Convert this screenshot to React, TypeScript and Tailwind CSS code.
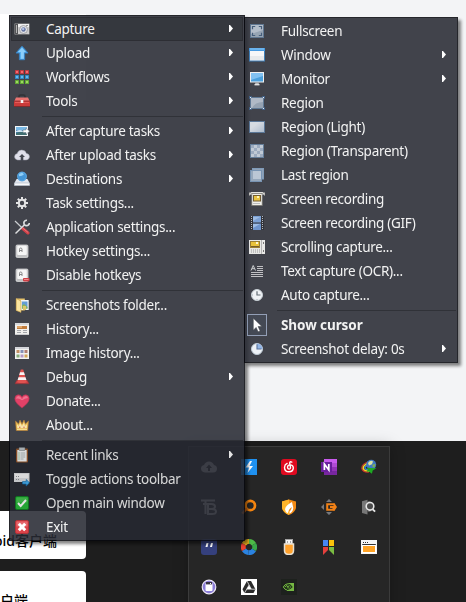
import React from "react";

type Item = { label: string; icon: React.ReactNode; arrow?: boolean; bold?: boolean; hover?: boolean; framed?: boolean };
type Group = Item[];

function Svg({ children }: { children: React.ReactNode }) {
  return (
    <svg width="16" height="16" viewBox="0 0 16 16" className="block shrink-0">
      {children}
    </svg>
  );
}

const Camera = (
  <Svg>
    <rect x="0.5" y="2.5" width="15" height="11" rx="1" fill="#c9c9c9" stroke="#55565a" />
    <rect x="1" y="3" width="3" height="10" fill="#3c3d40" />
    <rect x="2" y="4" width="1" height="8" fill="#a8a8a8" />
    <rect x="4" y="3" width="11" height="3" fill="#eeeeee" />
    <rect x="12" y="4" width="2" height="1" fill="#888" />
    <circle cx="9.5" cy="8.5" r="4" fill="#e2e2e4" stroke="#85868b" strokeWidth=".8" />
    <circle cx="9.5" cy="8.5" r="2.2" fill="#4a5d92" />
    <circle cx="9.2" cy="8" r="1.2" fill="#a8b9e2" />
  </Svg>
);
const UploadArrow = (
  <Svg>
    <path d="M8 1.2 14 8h-3.4v6.7H5.4V8H2z" fill="#3fa6ef" stroke="#1c6fb9" strokeWidth="1" />
    <path d="M8 2.7 11.8 7H9.8v6.8H7V7H4z" fill="#7cc9fb" />
  </Svg>
);
const Workflows = (
  <Svg>
    {[
      ["#b81e25", "#f0565c", 1],
      ["#1979b8", "#48b3ef", 6],
      ["#4c9a1b", "#8fd44a", 11],
    ].map(([d, l, y]) =>
      [1, 6, 11].map((x) => (
        <g key={`${x}-${y}`}>
          <rect x={x} y={y} width="4" height="4" rx=".5" fill={d as string} />
          <rect x={x + 1} y={Number(y) + 1} width="2" height="2" fill={l as string} />
        </g>
      ))
    )}
  </Svg>
);
const Toolbox = (
  <Svg>
    <path d="M5 5V3.2Q5 2 6.5 2h3Q11 2 11 3.2V5" fill="none" stroke="#15161a" strokeWidth="1.6" />
    <path d="M2 4.5h12l2 4.5H0z" fill="#e8605d" />
    <rect x="0" y="8" width="16" height="5.5" fill="#c4201f" />
    <rect x="0" y="7.6" width="16" height="1" fill="#8b1415" />
    <rect x="1" y="9" width="14" height="1" fill="#e24542" />
    <rect x="6.7" y="7" width="2.6" height="3" fill="#f4f4f4" />
    <rect x="0" y="13" width="16" height="1" fill="#6d0f10" />
  </Svg>
);
const AfterCapture = (
  <Svg>
    <rect x="1" y="3" width="13" height="10" fill="#f4f7fa" />
    <rect x="2" y="4" width="11" height="8" fill="#2d6fa9" />
    <rect x="2" y="4" width="11" height="3" fill="#69b1e4" />
    <path d="M2 8q4-2 7 0l4-1v2H2z" fill="#c9e2f2" />
    <path d="M2 10q5-2 11 0v2H2z" fill="#275c5e" />
    <path d="M9 7h3V5L15.6 8.2 12 11.4V9.5H9z" fill="#fff" stroke="#52616f" strokeWidth=".5" />
  </Svg>
);
const AfterUpload = (
  <Svg>
    <path d="M3.6 13Q.5 12.5.5 9.6.6 7 3.2 6.5 4 3 7.7 3q3.6 0 4.6 3.3 3 .5 3.2 3.4-.2 3-3.3 3.3z" fill="#dcdce9" stroke="#8d8f9d" strokeWidth=".5" />
    <path d="M8 7 11 10H9.3v4H6.7v-4H5z" fill="#2b2e38" />
  </Svg>
);
const Destinations = (
  <Svg>
    <path d="M2.6 8h10.8l2.2 4v2.5H.4V12z" fill="#dfe5ee" />
    <path d="M.4 12h15.2v2.5H.4z" fill="#f8f9fb" stroke="#8e9cac" strokeWidth=".5" />
    <circle cx="8" cy="5.5" r="4.8" fill="#2b87d1" />
    <path d="M5 3 8 1.5l2 1.7-2 1.6-3 .4z" fill="#80c9f6" />
    <circle cx="8" cy="5.5" r="4.4" fill="none" stroke="#59aae6" strokeWidth=".7" />
  </Svg>
);
const Gear = (
  <Svg>
    <g stroke="#e2e2e3" strokeWidth="2">
      <path d="M8 2v12M2 8h12M3.8 3.8l8.4 8.4M12.2 3.8l-8.4 8.4" />
    </g>
    <circle cx="8" cy="8" r="3.2" fill="#272a33" stroke="#e2e2e3" strokeWidth="2" />
  </Svg>
);
const AppTools = (
  <Svg>
    <path d="M1 2 9 9.8" stroke="#c5c8cc" strokeWidth="1.2" />
    <path d="M8.7 9.5 14 14" stroke="#cc2931" strokeWidth="3" strokeLinecap="round" />
    <path d="M8.7 9 14 13.4" stroke="#ee7076" strokeWidth=".8" />
    <path d="M1.5 14.5 10.5 5.8" stroke="#d9dadc" strokeWidth="1.5" />
    <path d="M13 1.3A2.7 2.7 0 1 0 15.3 4" fill="none" stroke="#d9dadc" strokeWidth="1.7" />
  </Svg>
);
const KeyShape = (
  <>
    <rect x="2" y="2" width="12" height="12.5" rx="1.2" fill="#bbbcbe" stroke="#e2e2e2" strokeWidth=".7" />
    <rect x="3.2" y="2.7" width="9.6" height="9.3" rx="1" fill="#f6f6f6" />
    <path d="M5.5 9V6.2q0-1.2 1.2-1.2T8 6.2V9M5.5 7.5H8" fill="none" stroke="#6d6e70" strokeWidth=".9" />
  </>
);
const Key = <Svg>{KeyShape}</Svg>;
const KeyOff = (
  <Svg>
    {KeyShape}
    <rect x="9" y="11" width="6.5" height="3.4" rx=".8" fill="#c9252c" />
    <rect x="10" y="12" width="4.5" height="1" fill="#f07b7c" />
  </Svg>
);
const Folder = (
  <Svg>
    <path d="M2.2 1.5h8.6v12H2.2z" fill="#e6bd58" />
    <path d="M6.7 3h8v10h-8z" fill="#f3f6fa" />
    <path d="M8 4.5h5.5v7H8z" fill="#4f91d0" />
    <path d="M8 8.5 10 7l3.5 3v1.8H8z" fill="#77aa48" />
    <path d="M2.2 1.5 7 4v11.4l-4.8-2z" fill="#fbe394" stroke="#bb8928" strokeWidth=".6" />
    <path d="M9 9h3v4H9z" fill="#d9bf56" />
  </Svg>
);
const History = (
  <Svg>
    <rect x="1" y="2" width="14" height="12" fill="#f0efed" />
    <rect x="1" y="2" width="14" height="2" fill="#d4d5d7" />
    <rect x="3" y="5" width="10" height="3" fill="#b96a20" />
    <rect x="3" y="5" width="5" height="2" fill="#dc9a55" />
    <path d="M3 9.5h4M3 11.5h4M9 9.5h4M9 11.5h4" stroke="#999ba0" />
    <rect x="1" y="13" width="14" height="1" fill="#c3c4c7" />
  </Svg>
);
const ImageHistory = (
  <Svg>
    <rect x="1" y="2" width="14" height="12" fill="#f3f3f1" />
    <rect x="1" y="2" width="14" height="2" fill="#cfd1d6" />
    {["#bb8250", "#7683af", "#a96f63", "#79a267", "#b18ebf", "#d09b42"].map((c, i) => (
      <rect key={i} x={2.5 + (i % 3) * 4} y={i < 3 ? 5 : 9.5} width="3" height="3" fill={c} />
    ))}
  </Svg>
);
const Cone = (
  <Svg>
    <path d="M1 14.8 2.6 11.5h10.8L15 14.8z" fill="#c2242a" stroke="#80171c" strokeWidth=".5" />
    <path d="M6.8.5h2.4l3.7 12.7q-4.9 1.7-9.8 0z" fill="#dd3b38" />
    <path d="M6 3.2h4l.8 2.7H5.2zM4.5 8.3h7l.9 2.8H3.6z" fill="#f7f5f5" />
  </Svg>
);
const Heart = (
  <Svg>
    <path d="M8 15Q.7 9.6.8 5.5.9 2 4.4 1.7 7 1.7 8 4 9 1.7 11.6 1.7 15.1 2 15.2 5.5 15.3 9.6 8 15z" fill="#df2753" stroke="#a5193a" strokeWidth=".6" />
    <path d="M2 5.8Q2.4 3 4.5 3 6.4 3 8 6.2 9.5 3 12 3q1.6 0 2 2-3 .3-6 2.2Q5 5 2 5.8z" fill="#f0607f" />
  </Svg>
);
const Crown = (
  <Svg>
    <path d="M1.5 4 4.6 7 6 3l2 4 2-4 1.4 4 3.1-3-.8 9.5H2.3z" fill="#e5b23e" stroke="#ae6b18" strokeWidth=".6" />
    <path d="M3 7.2 5 9l1-3.6L8 9l2-3.6L11 9l2-1.8-.3 4H3.3z" fill="#fae5a0" />
    <path d="M3 12.6h10" stroke="#fbe18d" />
    <circle cx="5.8" cy="10.2" r=".7" fill="#cb4936" />
    <circle cx="10" cy="10.2" r=".7" fill="#cb4936" />
  </Svg>
);
const Clipboard = (
  <Svg>
    <rect x="2" y="1.5" width="12" height="14" rx="1" fill="#955528" />
    <rect x="3.3" y="3" width="9.4" height="11.5" fill="#f5f7f8" />
    <rect x="5" y=".5" width="6" height="3" rx=".6" fill="#bcc3c8" stroke="#6b7075" strokeWidth=".5" />
    <path d="M4.5 6h1M4.5 8h1M4.5 10h1M4.5 12h1" stroke="#60a45c" />
    <path d="M6.5 6h4.7M6.5 8h4.7M6.5 10h4.7M6.5 12h3" stroke="#a8afb4" strokeWidth=".9" />
  </Svg>
);
const Toolbar = (
  <Svg>
    <rect x="0" y="2" width="15.5" height="9" fill="#dcdde0" />
    <rect x="1" y="3" width="13.5" height="4" fill="#f4f4f5" />
    <path d="M2 5.5h1M2 8.5h1M4 5.5h1M4 8.5h1" stroke="#8d9096" />
    <path d="M8.5 10.6h3.7V8.5l3.3 3.3-3.3 3.2v-2H8.5z" fill="#44aef0" stroke="#166eae" strokeWidth=".7" />
  </Svg>
);
const Check = (
  <Svg>
    <rect x="1.5" y="1.5" width="13" height="13" rx="1.5" fill="#27b83a" stroke="#0f8122" />
    <rect x="2.5" y="2.5" width="11" height="5" fill="#43c44d" />
    <path d="m4 8 2.7 3L12 5" fill="none" stroke="#fff" strokeWidth="2" />
  </Svg>
);
const Exit = (
  <Svg>
    <rect x="1.5" y="1.5" width="13" height="13" rx="1.5" fill="#d62930" stroke="#a5161d" />
    <rect x="2.5" y="2.5" width="11" height="5" fill="#e25258" />
    <path d="m4.8 4.8 6.4 6.4m0-6.4-6.4 6.4" stroke="#fff" strokeWidth="3" />
  </Svg>
);

const Fullscreen = (
  <Svg>
    <rect x="1.5" y="1.5" width="13" height="13" fill="#8998aa" stroke="#4b6583" />
    <path d="M2 2h12v5L2 11z" fill="#aab5c3" />
    <path d="M3.5 6.2V3.5h2.7M9.8 3.5h2.7v2.7M12.5 9.8v2.7H9.8M6.2 12.5H3.5V9.8" fill="none" stroke="#2d486a" strokeWidth="1.2" />
  </Svg>
);
const WindowIcon = (
  <Svg>
    <rect x=".5" y="1.5" width="15" height="12.5" fill="#f6f7f8" stroke="#286fae" />
    <rect x="0" y="1" width="16" height="3" fill="#2d8dde" />
    <rect x="1" y="1.5" width="14" height="1" fill="#80c7fa" />
    <path d="M1 9h14v4H1z" fill="#e5e8eb" />
  </Svg>
);
const MonitorIcon = (
  <Svg>
    <rect x="1" y="1" width="14" height="10.5" fill="#efefef" />
    <rect x="2" y="2" width="12" height="8.5" fill="#3394d9" />
    <path d="M2 2h12v3L2 9z" fill="#70baf0" />
    <rect x="6.2" y="11.5" width="3.6" height="2.5" fill="#aeb0b3" />
    <rect x="5.5" y="13" width="5" height="1.4" fill="#e1e1e1" />
  </Svg>
);
const Region = (
  <Svg>
    <rect x="1.5" y="2.5" width="13" height="11" fill="#8796a8" stroke="#4b6787" />
    <path d="M2 3h12v4Q6 7 3 13H2z" fill="#a6b1bf" />
    <g fill="#e7f0fa">
      <rect x="1" y="2" width="1" height="1" />
      <rect x="14" y="2" width="1" height="1" />
      <rect x="1" y="13" width="1" height="1" />
      <rect x="14" y="13" width="1" height="1" />
    </g>
    <path d="M0 1.5h3M.5 1v3M13 1.5h3M15.5 1v3M0 14.5h3M.5 12v3M13 14.5h3M15.5 12v3" stroke="#295180" strokeWidth=".8" />
  </Svg>
);
const RegionLight = (
  <Svg>
    <defs>
      <linearGradient id="light" x1="0" y1="0" x2="1" y2="1">
        <stop offset=".35" stopColor="#d2d7de" />
        <stop offset="1" stopColor="#a1b2c6" />
      </linearGradient>
    </defs>
    <rect x=".5" y="2.5" width="15" height="11" fill="url(#light)" stroke="#45658a" />
  </Svg>
);
const RegionTransparent = (
  <Svg>
    <rect x="1.5" y="1.5" width="13" height="13" fill="#b9c4d1" stroke="#506d8c" />
    <path d="M2 2h3v3H2zM8 2h3v3H8zM5 5h3v3H5zM11 5h3v3h-3zM2 8h3v3H2zM8 8h3v3H8zM5 11h3v3H5zM11 11h3v3h-3z" fill="#8fa1b7" />
  </Svg>
);
const LastRegion = (
  <Svg>
    <rect x="3.5" y="1.5" width="11" height="10.5" fill="#8096af" stroke="#6f8eaf" />
    <rect x="1.5" y="3.5" width="11" height="11" fill="#899db4" stroke="#6585a8" />
    <rect x="4" y="4" width="8" height="8" fill="#b3c1d1" />
  </Svg>
);
const ScreenRec = (
  <Svg>
    <rect x="1" y="1" width="14" height="3" rx="1.5" fill="#dfdfdc" />
    <rect x="2.8" y="2.5" width="10.4" height="12" fill="#f0efea" stroke="#65635c" strokeWidth=".8" />
    <rect x="4" y="4" width="8" height="6.5" fill="#604918" />
    <rect x="5" y="5" width="6" height="4.5" fill="#e7bc29" />
    <path d="M8 5h2v2H8z" fill="#fff4b2" />
    <rect x="4" y="12" width="7" height="1" fill="#b4b5b8" />
    <rect x="0" y="1.5" width="1" height="3" fill="#b5b4ae" />
    <rect x="15" y="1.5" width="1" height="3" fill="#b5b4ae" />
  </Svg>
);
const Film = (
  <Svg>
    <rect x="1" y="1" width="14" height="14" fill="#17191f" />
    <rect x="4" y="1" width="8" height="6.5" fill="#6a94cf" />
    <rect x="4" y="8.5" width="8" height="6.5" fill="#5b86c6" />
    <path d="M4 2h7L4 6zM4 9h7l-7 4z" fill="#91b4e2" />
    <path d="M2.5 1v14M13.5 1v14" stroke="#aab0b9" strokeWidth="1" strokeDasharray="1 1" />
  </Svg>
);
const Scrolling = (
  <Svg>
    <rect x="0" y="1" width="16" height="14" fill="#e6e6e4" />
    <rect x="1" y="2" width="10" height="7" fill="#8e6e18" />
    <rect x="2" y="3" width="8" height="5" fill="#e7bc22" />
    <path d="M7 3h2v2H7z" fill="#fff6ca" />
    <path d="M2 7h8v1H2z" fill="#64480e" />
    <path d="M2 11h9M2 13h9" stroke="#8c8c8a" strokeDasharray="1 1" />
    <rect x="12" y="1" width="1" height="14" fill="#aaa" />
    <path d="M14 3h1v2h-1zM14 11h1v2h-1z" fill="#666" />
  </Svg>
);
const Ocr = (
  <Svg>
    <path d="M2 7.5 4.2 2.5 6.5 7.5M3 5.7h2.5" stroke="#c7c9cc" fill="none" />
    <path d="M8 3.5h6M8 5.5h6M8 7.5h6M2 9.5h12M2 11.5h12M2 13.5h12" stroke="#c9cacc" strokeWidth=".9" />
  </Svg>
);
const Clock = (
  <Svg>
    <circle cx="8" cy="8" r="5.5" fill="#eef2f5" stroke="#c1cad0" />
    <path d="M8 4.2V8h3.5" fill="none" stroke="#4e5963" strokeWidth="1.2" />
    <path d="M8 13v-1M3 8h1" stroke="#9aa4ac" />
  </Svg>
);
const Delay = (
  <Svg>
    <circle cx="8" cy="8" r="5.5" fill="#edf2f7" stroke="#b8c5d2" />
    <path d="M8 8V2.5A5.5 5.5 0 0 1 13.5 8z" fill="#86ade3" />
    <path d="M8 3.3V8h4.5" fill="none" stroke="#436190" strokeWidth="1.1" />
  </Svg>
);
const Cursor = (
  <Svg>
    <path d="M4.3 1.2v12l2.8-2.8 2 4.4 2-.9-2-4.4h3.8z" fill="#fff" stroke="#25282e" strokeWidth=".5" />
  </Svg>
);

const mainGroups: Group[] = [
  [
    { label: "Capture", icon: Camera, arrow: true, hover: true },
    { label: "Upload", icon: UploadArrow, arrow: true },
    { label: "Workflows", icon: Workflows, arrow: true },
    { label: "Tools", icon: Toolbox, arrow: true },
  ],
  [
    { label: "After capture tasks", icon: AfterCapture, arrow: true },
    { label: "After upload tasks", icon: AfterUpload, arrow: true },
    { label: "Destinations", icon: Destinations, arrow: true },
    { label: "Task settings...", icon: Gear },
    { label: "Application settings...", icon: AppTools },
    { label: "Hotkey settings...", icon: Key },
    { label: "Disable hotkeys", icon: KeyOff },
  ],
  [
    { label: "Screenshots folder...", icon: Folder },
    { label: "History...", icon: History },
    { label: "Image history...", icon: ImageHistory },
    { label: "Debug", icon: Cone, arrow: true },
    { label: "Donate...", icon: Heart },
    { label: "About...", icon: Crown },
  ],
  [
    { label: "Recent links", icon: Clipboard, arrow: true },
    { label: "Toggle actions toolbar", icon: Toolbar },
    { label: "Open main window", icon: Check },
    { label: "Exit", icon: Exit },
  ],
];

const captureGroups: Group[] = [
  [
    { label: "Fullscreen", icon: Fullscreen },
    { label: "Window", icon: WindowIcon, arrow: true },
    { label: "Monitor", icon: MonitorIcon, arrow: true },
    { label: "Region", icon: Region },
    { label: "Region (Light)", icon: RegionLight },
    { label: "Region (Transparent)", icon: RegionTransparent },
    { label: "Last region", icon: LastRegion },
    { label: "Screen recording", icon: ScreenRec },
    { label: "Screen recording (GIF)", icon: Film },
    { label: "Scrolling capture...", icon: Scrolling },
    { label: "Text capture (OCR)...", icon: Ocr },
    { label: "Auto capture...", icon: Clock },
  ],
  [
    { label: "Show cursor", icon: Cursor, bold: true, framed: true },
    { label: "Screenshot delay: 0s", icon: Delay, arrow: true },
  ],
];

function Row({ item }: { item: Item }) {
  return (
    <div
      className={`flex h-6 items-center ${
        item.hover ? "bg-[#1a1d24] outline-1 -outline-offset-1 outline-[#101218]" : ""
      }`}
    >
      <div
        className={`flex shrink-0 items-center justify-center ${
          item.framed ? "ml-px h-[22px] w-5 border border-[#8593ad] bg-[#2b303d]" : "ml-[3px] w-4"
        }`}
      >
        {item.icon}
      </div>
      <span
        className={`flex-1 text-[13.5px] leading-6 whitespace-pre text-[#f2f2f2] ${
          item.framed ? "ml-[14px]" : "ml-4"
        } ${item.bold ? "font-bold tracking-[-.08px]" : "tracking-[-.29px]"}`}
      >
        {item.label}
      </span>
      {item.arrow && (
        <svg width="4" height="7" viewBox="0 0 4 7" className="mr-[10px] mb-px block">
          <path d="M0 0h1l3 3.5L1 7H0z" fill="#fff" />
        </svg>
      )}
    </div>
  );
}

function Menu({ groups, className }: { groups: Group[]; className: string }) {
  return (
    <div
      className={`absolute border border-[#07090e] bg-[#272a33] p-px opacity-[.875] shadow-[3px_3px_3px_rgba(0,0,0,.55)] ${className}`}
    >
      {groups.map((group, i) => (
        <div key={i}>
          {i > 0 && (
            <div className="flex h-1.5 items-center pl-[31px]">
              <div className="h-px w-full bg-[#14161d]" />
            </div>
          )}
          {group.map((item) => (
            <Row key={item.label} item={item} />
          ))}
        </div>
      ))}
    </div>
  );
}

const trayIcons: React.ReactNode[] = [
  <Svg>
    <path d="M4 13.5Q0 13 0 9.5 0 6.5 3 6 4.5 2.5 8 2.5T13 6q3 .4 3 3.8 0 3.5-4 3.7z" fill="#c4c4c4" />
    <path d="M8 5.5 11 9H9v3H7V9H5z" fill="#262626" />
  </Svg>,
  <Svg>
    <rect width="16" height="16" fill="#1f91f0" />
    <path d="M9 2 4.5 8.5H8L6.5 14 12 7H8.5L11 2z" fill="#fff" />
  </Svg>,
  <Svg>
    <rect width="16" height="16" rx="3" fill="#e00a20" />
    <path d="M10.8 3.1Q8.6 2 8.7 4.2l.8 4.1q.1 1.8-1.5 1.8-1.5-.2-1.5-1.9.1-2.2 2.5-2.3 3.3 0 3.3 3.2Q12 12.7 8 12.8 3.6 12.6 3.5 8.4q.1-2.8 2.6-4" fill="none" stroke="#fff" strokeWidth="1.4" strokeLinecap="round" />
  </Svg>,
  <Svg>
    <rect x="3" width="13" height="16" fill="#c95bee" />
    <path d="M11 4h5v4h-5z" fill="#b04bd4" />
    <path d="M11 8h5v4h-5z" fill="#9332b8" />
    <path d="M3 12h13v4H3z" fill="#7827a0" />
    <rect y="3" width="11" height="10" fill="#6a1e9d" />
    <path d="M3.4 11V5l4.4 6V5" fill="none" stroke="#fff" strokeWidth="1.7" />
  </Svg>,
  <Svg>
    <path d="M8 2.5Q.5 5 .8 9.5 2 13.5 8 13" fill="none" stroke="#c9352d" strokeWidth="1.2" />
    <path d="M8 4Q2 6 2.2 9.5 3.5 12.5 9 12" fill="none" stroke="#f4da24" strokeWidth="1.5" />
    <path d="M7.5 6Q3.6 7 4 9.4 5 11 9 10.7" fill="none" stroke="#3886d3" strokeWidth="1.4" />
    <circle cx="10.2" cy="5.8" r="5" fill="#3f78c4" />
    <path d="M7 4q2.5-3.5 5-1.6L11 5.3 8 6.5z" fill="#d9e3a5" />
    <path d="M11.5 5.5 14.5 5l-1 3.5-2-.5z" fill="#7fae58" />
    <path d="M6 8.5 9 9l6.5.3-3.8 2.2-.8 3.3-3-2.3-2.4.2 1.2-1.6z" fill="#1daa21" />
  </Svg>,
  <Svg>
    <path d="M0 1.5h14M2 5h5M4.5 2v13" stroke="#c4c4c4" strokeWidth="2" />
    <path d="M7 5h3.5Q14 5 14 7.5T10.5 10H7zm0 5h4q4 0 4 2.5T11 15H7z" fill="none" stroke="#c4c4c4" strokeWidth="2" />
  </Svg>,
  <Svg>
    <circle cx="9.3" cy="6.5" r="4.7" fill="none" stroke="#f58510" strokeWidth="2.7" />
    <path d="m6 9.5-4.7 5" stroke="#d46912" strokeWidth="2.5" />
  </Svg>,
  <Svg>
    <path d="M8 .5 15 2.5V9q-1 4.5-7 7-6-2.5-7-7V2.5z" fill="#f38a14" />
    <path d="M8 .5V16Q2 13.5 1 9V2.5z" fill="#ffb52b" />
    <path d="M11 3Q4.6 6.5 4 10.2q.2 3 2.8 4-.2-3 4-6.2-.3 2.8-2.4 4.7l.2 2q4-2.4 3.6-6.4Q11.5 5.5 11 3z" fill="#fff" />
  </Svg>,
  <Svg>
    <path d="M8 0 11 3H5zM0 8l3-3v6zM8 16l3-3H5z" fill="#77797e" />
    <path d="M13.5 5.2H6.2v5.6h6.3V8H9" fill="none" stroke="#f28116" strokeWidth="2" />
    <path d="M12.5 4.2h1L16 8l-2.5 3.8h-1z" fill="#f28116" />
  </Svg>,
  <Svg>
    <path d="M1 2.2 6.5.8v14.8L1 14z" fill="#777" />
    <path d="M6.5 2h3v11h-3z" fill="#555" />
    <circle cx="9" cy="7.3" r="3.8" fill="#4a4a4a" stroke="#e7e7e7" strokeWidth="1.6" />
    <path d="m11.7 10.3 2.4 2.4" stroke="#e7e7e7" strokeWidth="1.8" />
  </Svg>,
  <Svg>
    <rect width="16" height="16" rx="3" fill="#35407d" />
    <path d="M5.5 4h2L6.5 8h-2zM10 4h2l-1 4H9z" fill="#fff" />
  </Svg>,
  <Svg>
    <g fill="none" strokeWidth="4.8">
      <path d="M3 5.2A5.7 5.7 0 0 1 8 2.4" stroke="#f6ba21" />
      <path d="M8 2.4A5.7 5.7 0 0 1 12.9 5.2" stroke="#4dbb47" />
      <path d="M12.9 5.2A5.6 5.6 0 0 1 12.9 10.9" stroke="#39a94a" />
      <path d="M12.9 10.9A5.7 5.7 0 0 1 7.5 13.6" stroke="#2b83e0" />
      <path d="M7.5 13.6A5.7 5.7 0 0 1 3 10.8" stroke="#2b83e0" />
      <path d="M3 10.8A5.7 5.7 0 0 1 3 5.2" stroke="#ea4131" />
    </g>
  </Svg>,
  <Svg>
    <rect x="4.5" y=".5" width="7" height="5" fill="#f6f6f6" stroke="#a2a2a2" />
    <path d="M6 3h1M9 3h1" stroke="#555" />
    <path d="M3.5 5h9v6.5q0 4-4.5 4t-4.5-4z" fill="#ffa12b" stroke="#e7dfd2" strokeWidth="1.5" />
  </Svg>,
  <Svg>
    <path d="M2 1h5v6H2z" fill="#4687f4" />
    <path d="M8 1h5v6H8z" fill="#fbc20a" />
    <path d="M2 8h5v3l-5 5z" fill="#e4403d" />
    <path d="M8 8h5v8l-5-5z" fill="#7bbd42" />
  </Svg>,
  <Svg>
    <rect x=".6" y="1.6" width="14.8" height="12.8" fill="#333" stroke="#f6f6f6" strokeWidth="1.2" />
    <rect x="1" y="2" width="14" height="3" fill="#f6f6f6" />
    <path d="M2 3.5h1M4 3.5h1M6 3.5h1" stroke="#333" />
    <rect x="1" y="6" width="14" height="8" fill="#fff" />
    <rect x="2" y="7" width="12" height="6" fill="#ffa326" />
  </Svg>,
  <Svg>
    <circle cx="8" cy="8" r="6.8" fill="#8a7cd6" stroke="#eee9f7" strokeWidth="1.2" />
    <rect x="4.5" y="4" width="7" height="8" rx="1" fill="#fff" />
    <path d="M5 3h6v2.4H5z" fill="#393442" />
    <path d="M9 4h1v1H9z" fill="#fff" />
  </Svg>,
  <Svg>
    <rect width="16" height="16" fill="#fff" />
    <path d="M6 2h4l4.5 8.2-2 3.8h-9l-2-3.8z" fill="#2b2b2b" />
    <path d="M8 6.2 10.2 10H5.8z" fill="#fff" />
    <path d="M6 2l4.2 8M14.5 10.2H5.8M3.5 14 8 6.2" stroke="#fff" strokeWidth=".7" />
  </Svg>,
  <Svg>
    <rect width="16" height="16" fill="#1d211d" />
    <path d="M6 4h7v8H6z" fill="#76b843" />
    <path d="M2 8q5-6 9 0-4 5-9 0zM4.5 8q2.5-3 4.5 0-2 2.5-4.5 0z" fill="none" stroke="#203619" strokeWidth="1.2" />
    <path d="M2.3 8Q4 5 6 5M2.3 8Q4 11 6 11M4 8q1-1.5 2-1.5" fill="none" stroke="#76b843" />
  </Svg>,
];

export default function App() {
  return (
    <div className="relative flex h-[602px] w-[466px] flex-col overflow-hidden bg-[#1e1e1e] font-['Noto_Sans','Open_Sans',sans-serif]">
      <div className="h-[441px] shrink-0 bg-[#f3f4f6] pt-[14px]">
        <div className="h-[86px] w-[86px] bg-white" />
      </div>
      <div className="flex h-[161px] items-start justify-between pr-[76px]">
        <div className="flex w-[86px] flex-col gap-3 pt-[70px] font-['Noto_Sans','Noto_Sans_CJK_SC',sans-serif] text-sm font-medium text-black">
          <div className="flex h-12 items-center justify-end rounded-r bg-white pt-3 pr-[29px] whitespace-nowrap">
            Android客户端
          </div>
          <div className="flex h-12 items-center justify-end rounded-r bg-white pt-3 pr-[58px] whitespace-nowrap">
            客户端
          </div>
        </div>
        <div className="mt-[5px] grid h-[170px] w-[202px] auto-rows-[40px] grid-cols-[repeat(5,40px)] border border-[#3b3b3b] bg-[#262626] shadow-[0_0_14px_rgba(0,0,0,.25)]">
          {trayIcons.map((icon, i) => (
            <div key={i} className="flex items-center justify-center">
              {icon}
            </div>
          ))}
        </div>
      </div>
      <Menu groups={mainGroups} className="top-[15px] left-[9px] w-[236px]" />
      <Menu groups={captureGroups} className="top-[17px] left-[244px] w-[214px]" />
    </div>
  );
}
